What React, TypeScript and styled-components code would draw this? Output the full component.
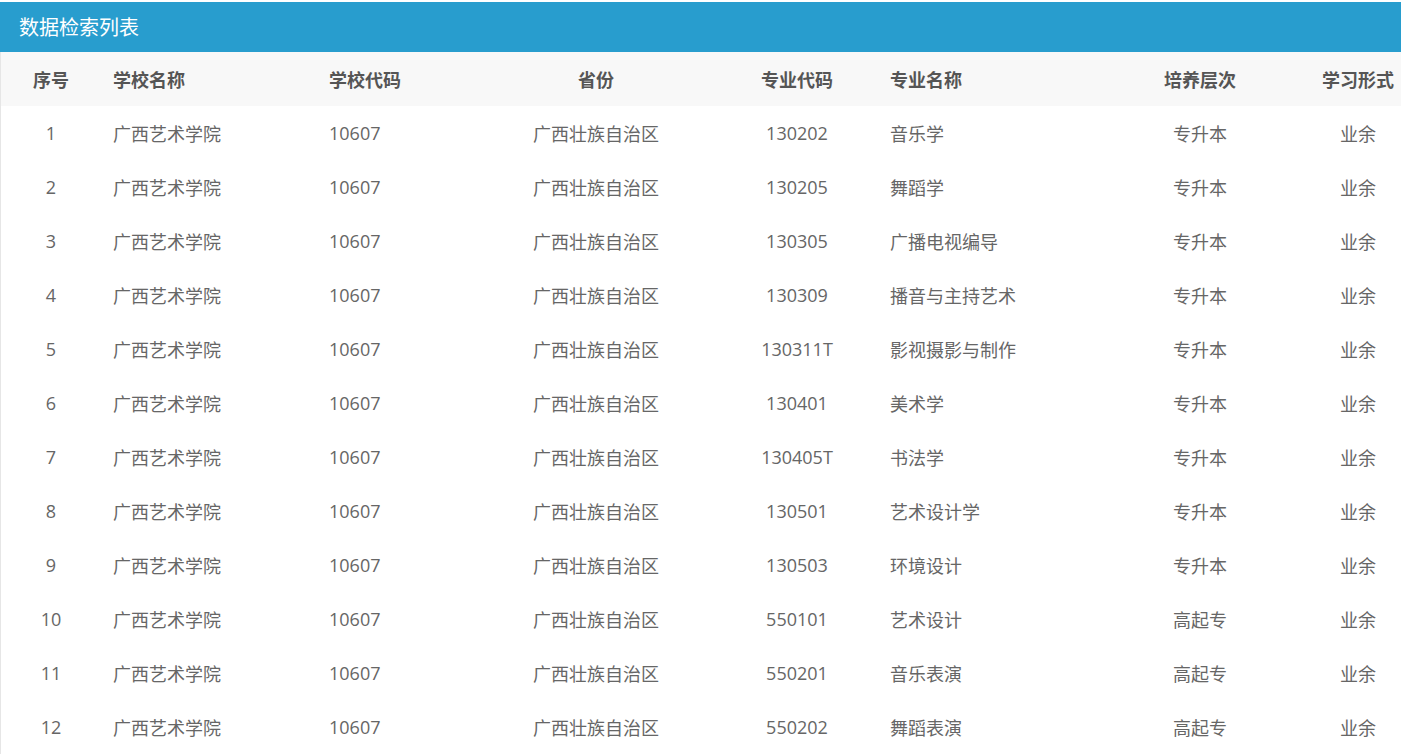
import React from "react";
import styled, { createGlobalStyle } from "styled-components";

const Global = createGlobalStyle`
  html, body { margin: 0; padding: 0; background: #fff; }
  body { font-family: "Open Sans", "Noto Sans CJK SC", sans-serif; overflow: hidden; }
`;

const Panel = styled.div`
  margin-top: 2px;
  width: 1401px;
  box-sizing: border-box;
  border-left: 1px solid #e6e6e6;
`;

const TitleBar = styled.div`
  height: 50px;
  margin-left: -1px;
  background: #289dce;
  color: #fff;
  font-size: 20px;
  line-height: 50px;
  padding-left: 19px;
  font-family: "Noto Sans CJK SC", sans-serif;
`;

const Table = styled.table`
  border-collapse: collapse;
  table-layout: fixed;
  width: 1400px;
`;

const HeadRow = styled.tr`
  background: #f8f8f8;
  height: 54px;
`;

const BodyRow = styled.tr`
  height: 54px;
`;

const Th = styled.th<{ $align: "left" | "center"; $pad: number }>`
  padding: 0 ${(p) => p.$pad}px;
  text-align: ${(p) => p.$align};
  font-size: 18px;
  font-weight: 700;
  color: #555;
  font-family: "Noto Sans CJK SC", sans-serif;
  white-space: nowrap;
`;

const Td = styled.td<{ $align: "left" | "center"; $pad: number }>`
  padding: 0 ${(p) => p.$pad}px;
  text-align: ${(p) => p.$align};
  font-size: 18px;
  color: #666;
  white-space: nowrap;
`;

type Col = { key: string; title: string; width: number; align: "left" | "center"; pad: number };

const cols: Col[] = [
  { key: "no", title: "序号", width: 100, align: "center", pad: 12 },
  { key: "school", title: "学校名称", width: 216, align: "left", pad: 12 },
  { key: "code", title: "学校代码", width: 159, align: "left", pad: 12 },
  { key: "prov", title: "省份", width: 240, align: "center", pad: 12 },
  { key: "mcode", title: "专业代码", width: 162, align: "center", pad: 12 },
  { key: "mname", title: "专业名称", width: 207, align: "left", pad: 12 },
  { key: "level", title: "培养层次", width: 230, align: "center", pad: 12 },
  { key: "form", title: "学习形式", width: 86, align: "center", pad: 0 },
];

const majors: [string, string, string][] = [
  ["130202", "音乐学", "专升本"],
  ["130205", "舞蹈学", "专升本"],
  ["130305", "广播电视编导", "专升本"],
  ["130309", "播音与主持艺术", "专升本"],
  ["130311T", "影视摄影与制作", "专升本"],
  ["130401", "美术学", "专升本"],
  ["130405T", "书法学", "专升本"],
  ["130501", "艺术设计学", "专升本"],
  ["130503", "环境设计", "专升本"],
  ["550101", "艺术设计", "高起专"],
  ["550201", "音乐表演", "高起专"],
  ["550202", "舞蹈表演", "高起专"],
];

export default function App() {
  return (
    <>
      <Global />
      <Panel>
        <TitleBar>数据检索列表</TitleBar>
        <Table>
          <colgroup>
            {cols.map((c) => (
              <col key={c.key} style={{ width: c.width }} />
            ))}
          </colgroup>
          <thead>
            <HeadRow>
              {cols.map((c) => (
                <Th key={c.key} $align={c.align} $pad={c.pad}>
                  {c.title}
                </Th>
              ))}
            </HeadRow>
          </thead>
          <tbody>
            {majors.map(([code, name, level], i) => {
              const vals = [String(i + 1), "广西艺术学院", "10607", "广西壮族自治区", code, name, level, "业余"];
              return (
                <BodyRow key={code}>
                  {cols.map((c, j) => (
                    <Td key={c.key} $align={c.align} $pad={c.pad}>
                      {vals[j]}
                    </Td>
                  ))}
                </BodyRow>
              );
            })}
          </tbody>
        </Table>
      </Panel>
    </>
  );
}
